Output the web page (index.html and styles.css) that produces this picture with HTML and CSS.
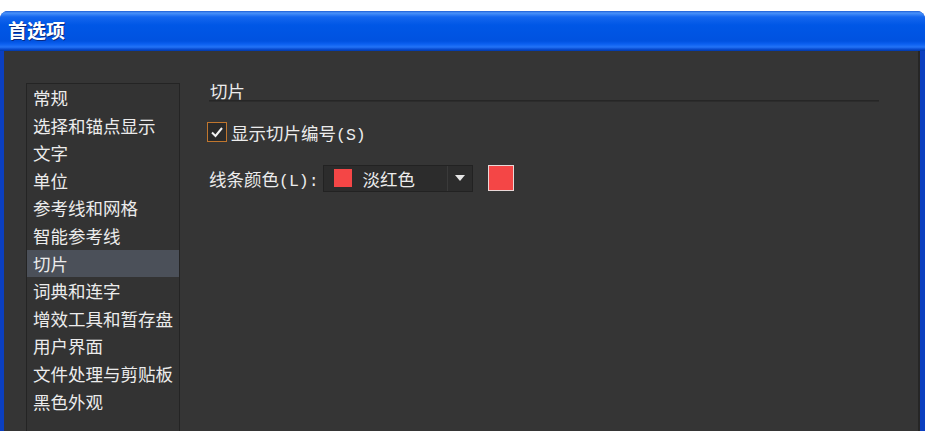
FILE: index.html
```html
<!DOCTYPE html>
<html lang="zh-CN">
<head>
    <meta charset="UTF-8">
    <title>首选项</title>
    <link rel="stylesheet" href="styles.css">
</head>
<body>
    <div class="window">
        <div class="titlebar">首选项</div>
        <div class="client">
            <ul class="nav-list">
                <li>常规</li>
                <li>选择和锚点显示</li>
                <li>文字</li>
                <li>单位</li>
                <li>参考线和网格</li>
                <li>智能参考线</li>
                <li class="active">切片</li>
                <li>词典和连字</li>
                <li>增效工具和暂存盘</li>
                <li>用户界面</li>
                <li>文件处理与剪贴板</li>
                <li>黑色外观</li>
            </ul>
            <div class="panel">
                <div class="section-title">切片</div>
                <label class="check-row">
                    <span class="checkbox">
                        <svg viewBox="0 0 16 16" width="16" height="16"><path d="M3 8.5 L6.5 12 L13 4" fill="none" stroke="#f2f2f2" stroke-width="2"/></svg>
                    </span>
                    <span>显示切片编号<span class="latin">(S)</span></span>
                </label>
                <div class="color-row">
                    <span class="row-label">线条颜色<span class="latin">(L):</span></span>
                    <div class="dropdown">
                        <span class="chip"></span>
                        <span class="dd-text">淡红色</span>
                        <span class="dd-arrow">
                            <svg viewBox="0 0 10 6" width="10" height="6"><path d="M0 0 H10 L5 6 Z" fill="#e6e6e6"/></svg>
                        </span>
                    </div>
                    <span class="swatch"></span>
                </div>
            </div>
        </div>
    </div>
</body>
</html>
```

FILE: styles.css
```css
body {
    margin: 0;
    background: #ffffff;
    font-family: "Noto Sans CJK SC", "Liberation Sans", sans-serif;
    overflow: hidden;
}
.window {
    margin-top: 11px;
    height: 420px;
    border-radius: 8px 8px 0 0;
    overflow: hidden;
    display: flex;
    flex-direction: column;
    background: #0b3fc0;
}
.titlebar {
    height: 40px;
    box-sizing: border-box;
    padding-left: 8px;
    line-height: 38px;
    color: #ffffff;
    font-size: 19px;
    font-weight: bold;
    text-shadow: 1px 1px 0 #0a2a80;
    background: linear-gradient(to bottom, #1c5ed6 0, #4a92fa 2px, #1466ee 6px, #0057e6 14px, #0052e0 30px, #0b5ff0 33px, #2373f6 36px, #0a4ed4 38px, #0038a8 40px);
}
.client {
    flex: 1;
    display: flex;
    margin: 0 5px 0 4px;
    border-right: 2px solid #262626;
    background: #353535;
    padding: 32px 0 0 22px;
}
.nav-list {
    list-style: none;
    margin: 0;
    padding: 0;
    width: 152px;
    border: 1px solid #242424;
    border-bottom: none;
    background: #333333;
    color: #ececec;
    font-size: 17.5px;
}
.nav-list li {
    height: 27.6px;
    line-height: 27.6px;
    padding-left: 6px;
    white-space: nowrap;
}
.nav-list li.active {
    background: #4b5059;
}
.panel {
    flex: 0 0 670px;
    margin-left: 29px;
    color: #ececec;
    font-size: 17.5px;
}
.latin {
    font-family: "Liberation Mono", monospace;
    font-size: 16.5px;
}
.section-title {
    height: 17px;
    line-height: 16px;
    border-bottom: 1px solid #262626;
    box-shadow: 0 1px 0 #2c2c2c;
    padding-left: 1px;
}
.check-row {
    display: flex;
    align-items: center;
    gap: 4px;
    margin-top: 20px;
    height: 22px;
}
.checkbox {
    width: 18px;
    height: 18px;
    margin-left: -2px;
    border: 1px solid #c0762e;
    background: #2a2a2a;
    display: flex;
    align-items: center;
    justify-content: center;
}
.color-row {
    display: flex;
    align-items: center;
    margin-top: 21px;
    height: 28px;
}
.row-label {
    margin-right: 4px;
}
.dropdown {
    width: 148px;
    height: 25px;
    border: 1px solid #222222;
    background: #2c2c2c;
    display: flex;
    align-items: center;
}
.chip {
    width: 18px;
    height: 18px;
    margin-left: 10px;
    background: #f44646;
}
.dd-text {
    margin-left: 11px;
    flex: 1;
}
.dd-arrow {
    width: 24px;
    height: 25px;
    border-left: 1px solid #3a3a3a;
    display: flex;
    align-items: center;
    justify-content: center;
}
.swatch {
    width: 24px;
    height: 24px;
    margin-left: 15px;
    border: 1px solid #e8d8d8;
    background: #f44646;
}
```
